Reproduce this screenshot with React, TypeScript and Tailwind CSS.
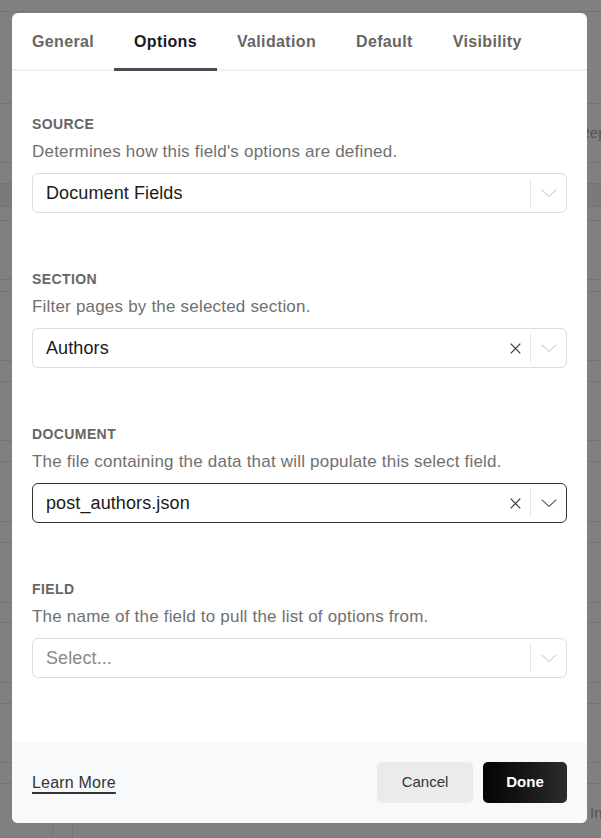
import React from "react";

// row boundaries of the dimmed page behind the modal (y of each bottom border)
const pageRows: { h: number; band?: boolean; text?: string }[] = [
  { h: 12 },
  { h: 92 },
  { h: 59, text: "Rep" },
  { h: 21 },
  { h: 23, band: true },
  { h: 14 },
  { h: 59 },
  { h: 12 },
  { h: 69 },
  { h: 21 },
  { h: 59 },
  { h: 21 },
  { h: 60 },
  { h: 21 },
  { h: 60 },
  { h: 20 },
  { h: 60 },
  { h: 21 },
  { h: 59 },
  { h: 21 },
];

const tabs = ["General", "Options", "Validation", "Default", "Visibility"];

interface FieldProps {
  label: string;
  description: string;
  value?: string;
  clearable?: boolean;
  focused?: boolean;
}

function Chevron({ color }: { color: string }) {
  return (
    <svg width="16" height="8" viewBox="0 0 16 8" fill="none">
      <polyline
        points="0.6,0.6 8,7.4 15.4,0.6"
        stroke={color}
        strokeWidth="1.1"
        strokeLinejoin="round"
      />
    </svg>
  );
}

function ClearIcon() {
  return (
    <svg width="11" height="11" viewBox="0 0 11 11" fill="none">
      <path d="M0.7 0.7 L10.3 10.3 M10.3 0.7 L0.7 10.3" stroke="#333" strokeWidth="1.2" />
    </svg>
  );
}

function SelectField({ label, description, value, clearable, focused }: FieldProps) {
  return (
    <div className="flex flex-col">
      <div className="text-[14px] leading-4 font-bold uppercase tracking-[0.4px] text-[#666]">
        {label}
      </div>
      <div className="mt-[8px] text-[17px] leading-6 tracking-[0.2px] text-[#707070]">
        {description}
      </div>
      <div
        className={`mt-[9px] h-10 flex items-center rounded-md border bg-white ${
          focused ? "border-[#333]" : "border-[#dddddd]"
        }`}
      >
        <div
          className={`flex-1 pl-[13px] text-[18px] tracking-[0.1px] ${
            value ? "text-[#1a1a1a]" : "text-[#888]"
          }`}
        >
          {value ?? "Select..."}
        </div>
        {clearable && (
          <div className="w-[30px] flex items-center justify-center">
            <ClearIcon />
          </div>
        )}
        <div className="w-px h-[28px] bg-[#e2e2e2]" />
        <div className="w-[35px] flex items-center justify-center">
          <Chevron color={focused ? "#555" : "#d0d0d0"} />
        </div>
      </div>
    </div>
  );
}

export default function App() {
  return (
    <div className="relative h-[838px] w-[601px] overflow-hidden bg-[#808080] font-['Liberation_Sans',Arial,sans-serif]">
      {/* dimmed page underneath */}
      <div className="flex flex-col">
        {pageRows.map((row, i) => (
          <div
            key={i}
            style={{ height: row.h }}
            className={`flex items-center justify-end border-b border-[#747474] ${
              row.band ? "bg-[#7a7a7a]" : ""
            }`}
          >
            {row.text && (
              <span className="w-[22px] whitespace-nowrap text-[15px] text-[#555]">
                {row.text}
              </span>
            )}
          </div>
        ))}
        <div className="flex h-[54px]">
          <div className="w-[52px]" />
          <div className="w-[21px] border-x border-[#747474]" />
          <div className="flex-1 flex items-end justify-end pb-[14px]">
            <span className="w-[11px] whitespace-nowrap text-[15px] text-[#555]">In</span>
          </div>
        </div>
      </div>

      {/* modal */}
      <div className="absolute inset-0 flex items-start pl-3 pt-[13px]">
        <div className="w-[575px] h-[810px] flex flex-col rounded-md bg-white overflow-hidden">
          <div className="flex border-b-2 border-[#f1f1f1]">
            {tabs.map((tab) => {
              const active = tab === "Options";
              return (
                <div
                  key={tab}
                  className={`relative h-[56px] px-5 pt-[2px] flex items-center text-base tracking-[0.35px] font-bold ${
                    active ? "text-[#1a1a1a]" : "text-[#666]"
                  }`}
                >
                  {tab}
                  {active && (
                    <div className="absolute left-0 right-0 -bottom-[2px] h-[3px] bg-[#4b4b55]" />
                  )}
                </div>
              );
            })}
          </div>

          <div className="flex-1 flex flex-col gap-[58px] px-5 pt-[45px]">
            <SelectField
              label="Source"
              description="Determines how this field's options are defined."
              value="Document Fields"
            />
            <SelectField
              label="Section"
              description="Filter pages by the selected section."
              value="Authors"
              clearable
            />
            <SelectField
              label="Document"
              description="The file containing the data that will populate this select field."
              value="post_authors.json"
              clearable
              focused
            />
            <SelectField
              label="Field"
              description="The name of the field to pull the list of options from."
            />
          </div>

          <div className="h-[81px] flex items-center justify-between px-5 bg-[#f8f9fa]">
            <a className="text-base tracking-[0.2px] text-[#333] underline underline-offset-[4px] decoration-[1.5px]">
              Learn More
            </a>
            <div className="flex gap-[10px]">
              <button className="w-[96px] h-[41px] rounded-[5px] bg-[#ebebeb] text-[15px] text-[#333]">
                Cancel
              </button>
              <button className="w-[84px] h-[41px] rounded-[5px] bg-gradient-to-r from-[#050505] to-[#2c2c2c] text-[15px] font-bold text-white">
                Done
              </button>
            </div>
          </div>
        </div>
      </div>
    </div>
  );
}
